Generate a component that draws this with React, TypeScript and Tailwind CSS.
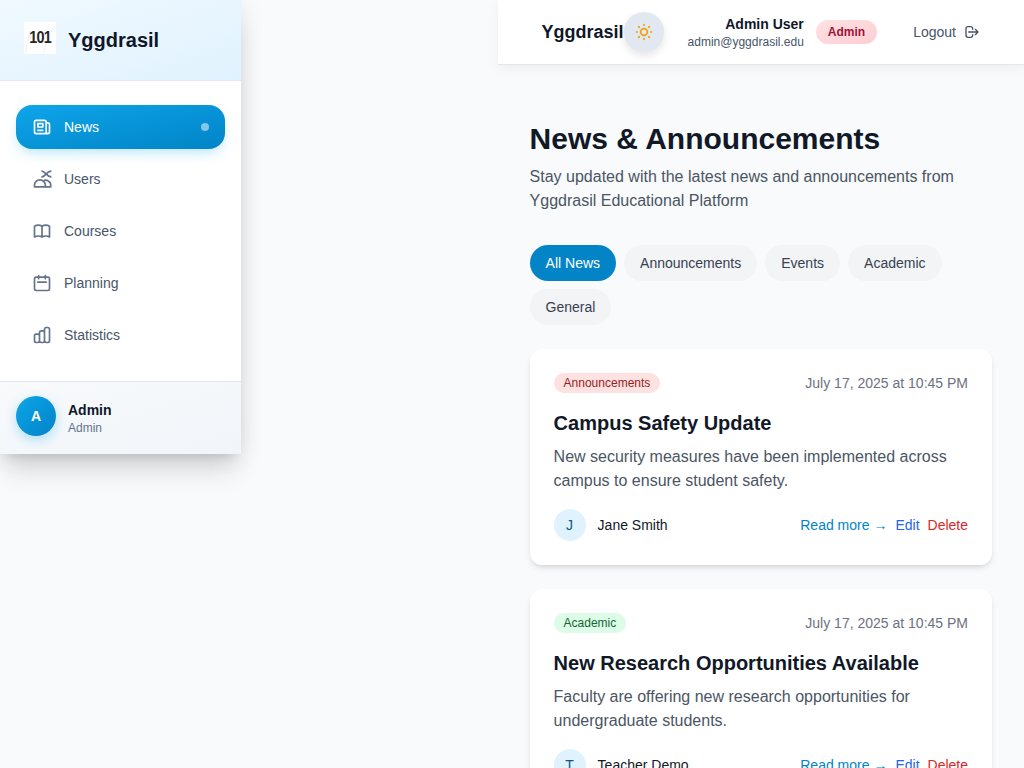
import React from 'react';
import { HiOutlineNewspaper, HiOutlineBookOpen, HiOutlineCalendar, HiOutlineChartBar, HiOutlineSun, HiOutlineLogout } from 'react-icons/hi';

const UsersGlyph = ({ className }: { className?: string }) => (
    <svg viewBox="0 0 24 24" fill="none" stroke="currentColor" strokeWidth={2} strokeLinecap="round" strokeLinejoin="round" className={className}>
        <path d="M3 21.5v-2a6.5 6.5 0 0 1 13 0v2H3z" />
        <path d="M16 21.500h6.500v-2a6 6 0 0 0-9-5.200" />
        <path d="M12 2.500c3.500 0 5 6 10.500 7" />
        <path d="M12 9.500c3.500 0 5-6 10.500-7" />
    </svg>
);

const LogoMark = () => (
    <div className="relative w-8 h-8 mb-[5px] bg-white flex items-center justify-center overflow-hidden">
        <svg viewBox="0 0 32 32" fill="none" className="absolute inset-0 w-full h-full text-[#e5e7eb]">
            <path d="M1 31L6 9M20 31c2-10 5-20 11-26" stroke="currentColor" strokeWidth={0.6} />
        </svg>
        <span className="relative text-[16px] leading-none font-bold tracking-[-0.8px] text-[#262626] scale-x-90">101</span>
    </div>
);

const navItems = [
    { label: 'News', icon: HiOutlineNewspaper, active: true },
    { label: 'Users', icon: UsersGlyph },
    { label: 'Courses', icon: HiOutlineBookOpen },
    { label: 'Planning', icon: HiOutlineCalendar },
    { label: 'Statistics', icon: HiOutlineChartBar },
];

const filters = ['All News', 'Announcements', 'Events', 'Academic', 'General'];

const posts = [
    {
        tag: 'Announcements',
        tagClass: 'bg-[#fee2e2] text-[#991b1b]',
        title: 'Campus Safety Update',
        body: 'New security measures have been implemented across campus to ensure student safety.',
        author: 'Jane Smith',
    },
    {
        tag: 'Academic',
        tagClass: 'bg-[#dcfce7] text-[#166534]',
        title: 'New Research Opportunities Available',
        body: 'Faculty are offering new research opportunities for undergraduate students.',
        author: 'Teacher Demo',
    },
];

export default function App() {
    return (
        <div className="flex h-[768px] overflow-hidden bg-[#f8fafc] font-['Liberation_Sans',sans-serif]">
            {/* Sidebar */}
            <div className="w-[497.6px] shrink-0">
                <aside className="w-[241px] h-[454px] flex flex-col bg-white shadow-[0_20px_25px_-5px_rgba(0,0,0,0.14),0_8px_10px_-6px_rgba(0,0,0,0.1),0_0_24px_rgba(0,0,0,0.08)]">
                    <div className="h-[81px] shrink-0 flex items-center gap-3 px-6 border-b border-[#e2e8f0] bg-gradient-to-br from-[#f0f9ff] to-[#e0f2fe]">
                        <LogoMark />
                        <span className="text-[20px] font-bold text-[#0f172a] mb-[1px]">Yggdrasil</span>
                    </div>
                    <nav className="flex-1 px-4 pt-6 flex flex-col gap-2">
                        {navItems.map(item => {
                            const Icon = item.icon;
                            return (
                                <div
                                    key={item.label}
                                    className={`h-11 shrink-0 flex items-center gap-3 px-4 rounded-2xl text-sm ${item.active ? 'bg-gradient-to-br from-[#0ea5e9] to-[#0284c7] text-white shadow-[0_6px_14px_-4px_rgba(14,165,233,0.35)]' : 'text-[#475569]'}`}
                                >
                                    <Icon className={`w-5 h-5 shrink-0 ${item.active ? 'text-white' : 'text-[#64748b]'}`} />
                                    <span className="flex-1">{item.label}</span>
                                    {item.active && <span className="w-2 h-2 rounded-full bg-white/50" />}
                                </div>
                            );
                        })}
                    </nav>
                    <div className="h-[73px] shrink-0 flex items-center gap-3 px-4 border-t border-[#e2e8f0] bg-gradient-to-br from-[#f8fafc] to-[#f1f5f9]">
                        <div className="w-10 h-10 mb-1 rounded-full bg-gradient-to-br from-[#0ea5e9] to-[#0284c7] text-white flex items-center justify-center text-sm font-bold shadow-[0_4px_12px_rgba(14,165,233,0.3)]">A</div>
                        <div>
                            <div className="text-sm font-bold leading-5 text-[#0f172a]">Admin</div>
                            <div className="text-xs leading-4 text-[#64748b]">Admin</div>
                        </div>
                    </div>
                </aside>
            </div>

            {/* Main */}
            <div className="flex-1 min-w-0 flex flex-col">
                <header className="h-[65px] shrink-0 flex items-center pl-11 pr-11 bg-white border-b border-[#e2e8f0] shadow-[0_4px_12px_rgba(0,0,0,0.05)]">
                    <span className="text-lg font-bold text-[#0f172a]">Yggdrasil</span>
                    <button className="w-10 h-10 rounded-full bg-[#e2e8f0] flex items-center justify-center shadow-[0_4px_8px_rgba(0,0,0,0.1)]">
                        <HiOutlineSun className="w-5 h-5 text-[#f59e0b]" />
                    </button>
                    <div className="ml-auto text-right">
                        <div className="text-sm font-bold leading-5 text-[#0f172a]">Admin User</div>
                        <div className="text-xs leading-4 text-[#475569]">admin@yggdrasil.edu</div>
                    </div>
                    <span className="ml-3 h-6 px-3 flex items-center rounded-full bg-gradient-to-br from-[#fee2e2] to-[#fecdd3] text-xs font-bold text-[#9f1239]">Admin</span>
                    <button className="ml-9 flex items-center gap-2 text-sm text-[#475569]">
                        Logout
                        <HiOutlineLogout className="w-4 h-4" />
                    </button>
                </header>

                <main className="flex-1 min-h-0 overflow-hidden px-8 pt-[56px]">
                    <h1 className="text-[30px] leading-9 font-bold text-[#111827]">News &amp; Announcements</h1>
                    <p className="mt-2 text-base leading-6 text-[#4b5563]">Stay updated with the latest news and announcements from Yggdrasil Educational Platform</p>
                    <div className="mt-8 flex flex-wrap gap-2">
                        {filters.map((f, i) => (
                            <button key={f} className={`h-9 px-4 rounded-full text-sm ${i === 0 ? 'bg-[#0284c7] text-white' : 'bg-[#f3f4f6] text-[#374151]'}`}>{f}</button>
                        ))}
                    </div>
                    <div className="mt-6 flex flex-col gap-6">
                        {posts.map(p => (
                            <article key={p.title} className="shrink-0 bg-white rounded-xl p-6 shadow-[0_4px_6px_-1px_rgba(0,0,0,0.1),0_2px_4px_-2px_rgba(0,0,0,0.1)]">
                                <div className="flex items-center justify-between">
                                    <span className={`px-[10px] py-[2px] rounded-full text-xs leading-4 ${p.tagClass}`}>{p.tag}</span>
                                    <span className="text-sm text-[#6b7280]">July 17, 2025 at 10:45 PM</span>
                                </div>
                                <h2 className="mt-4 text-xl font-bold leading-7 text-[#111827]">{p.title}</h2>
                                <p className="mt-2 text-base leading-6 text-[#4b5563]">{p.body}</p>
                                <div className="mt-4 flex items-center">
                                    <div className="w-8 h-8 rounded-full bg-[#e0f2fe] text-[#075985] flex items-center justify-center text-sm">{p.author[0]}</div>
                                    <span className="ml-3 text-sm text-[#111827]">{p.author}</span>
                                    <a className="ml-auto text-sm text-[#0284c7]">Read more →</a>
                                    <a className="ml-2 text-sm text-[#2563eb]">Edit</a>
                                    <a className="ml-2 text-sm text-[#dc2626]">Delete</a>
                                </div>
                            </article>
                        ))}
                    </div>
                </main>
            </div>
        </div>
    );
}
